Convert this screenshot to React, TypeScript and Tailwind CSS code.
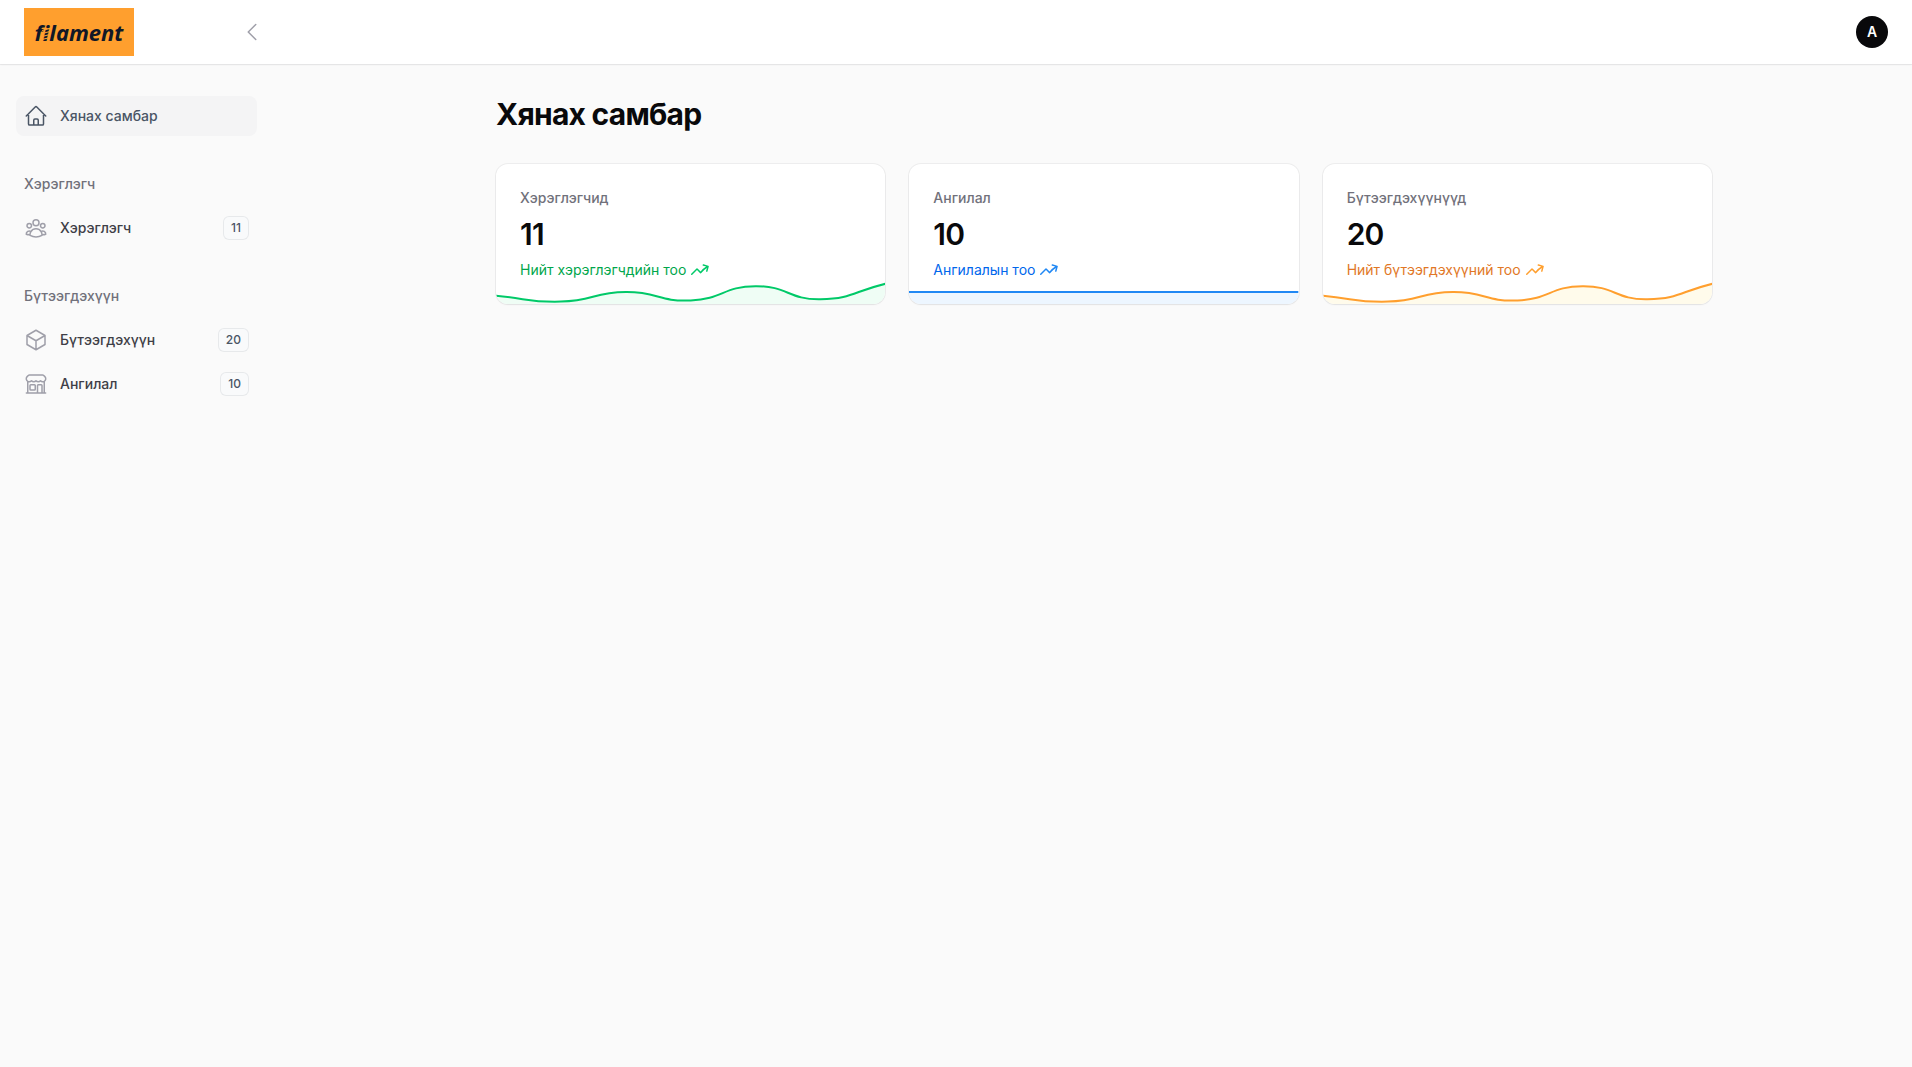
import type { IconType } from "react-icons";
import {
  HiMiniArrowTrendingUp,
  HiOutlineBuildingStorefront,
  HiOutlineChevronLeft,
  HiOutlineCube,
  HiOutlineHome,
  HiOutlineUserGroup,
} from "react-icons/hi2";

type NavItem = { label: string; icon: IconType; badge: string };
type NavGroup = { label: string; items: NavItem[] };

const groups: NavGroup[] = [
  { label: "Хэрэглэгч", items: [{ label: "Хэрэглэгч", icon: HiOutlineUserGroup, badge: "11" }] },
  {
    label: "Бүтээгдэхүүн",
    items: [
      { label: "Бүтээгдэхүүн", icon: HiOutlineCube, badge: "20" },
      { label: "Ангилал", icon: HiOutlineBuildingStorefront, badge: "10" },
    ],
  },
];

type Stat = {
  label: string;
  value: string;
  description: string;
  text: string;
  icon: string;
  stroke: string;
  fill: string;
  chart: number[];
};

const wave = [7, 2, 10, 3, 15, 4, 17];

const stats: Stat[] = [
  {
    label: "Хэрэглэгчид",
    value: "11",
    description: "Нийт хэрэглэгчдийн тоо",
    text: "text-[#00a64b]",
    icon: "text-[#00c968]",
    stroke: "stroke-[#00c968]",
    fill: "fill-[#effdf5]",
    chart: wave,
  },
  {
    label: "Ангилал",
    value: "10",
    description: "Ангилалын тоо",
    text: "text-[#0067ec]",
    icon: "text-[#2088f4]",
    stroke: "stroke-[#2088f4]",
    fill: "fill-[#edf6ff]",
    chart: [],
  },
  {
    label: "Бүтээгдэхүүнүүд",
    value: "20",
    description: "Нийт бүтээгдэхүүний тоо",
    text: "text-[#e17726]",
    icon: "text-[#ff9f2e]",
    stroke: "stroke-[#ff9f2e]",
    fill: "fill-[#fffbeb]",
    chart: wave,
  },
];

const CHART_W = 390;
const CHART_H = 24;

/* Smooth line through the points, with a tension of one half. */
function curve(values: number[]) {
  if (values.length === 0) return `M0 12H${CHART_W}`;
  const pts = values.map((v, i) => ({
    x: (i * CHART_W) / (values.length - 1),
    y: 24 - v * 1.19,
  }));
  const ctl = pts.map((p, i) => {
    const a = pts[Math.max(i - 1, 0)];
    const b = pts[Math.min(i + 1, pts.length - 1)];
    const d0 = Math.hypot(p.x - a.x, p.y - a.y);
    const d1 = Math.hypot(b.x - p.x, b.y - p.y);
    const fa = (0.5 * d0) / (d0 + d1);
    const fb = (0.5 * d1) / (d0 + d1);
    return {
      px: p.x - fa * (b.x - a.x),
      py: p.y - fa * (b.y - a.y),
      nx: p.x + fb * (b.x - a.x),
      ny: p.y + fb * (b.y - a.y),
    };
  });
  return pts
    .map((p, i) =>
      i === 0
        ? `M${p.x} ${p.y}`
        : `C${ctl[i - 1].nx} ${ctl[i - 1].ny} ${ctl[i].px} ${ctl[i].py} ${p.x} ${p.y}`,
    )
    .join("");
}

function Sparkline({ stat }: { stat: Stat }) {
  const d = curve(stat.chart);
  return (
    <svg
      aria-hidden="true"
      viewBox={`0 0 ${CHART_W} ${CHART_H}`}
      preserveAspectRatio="none"
      className="absolute inset-x-0 bottom-0 h-6 w-full"
    >
      <path d={`${d}V${CHART_H}H0Z`} className={stat.fill} />
      <path d={d} fill="none" strokeWidth="2" vectorEffect="non-scaling-stroke" className={stat.stroke} />
    </svg>
  );
}

function StatCard({ stat }: { stat: Stat }) {
  return (
    <section className="relative overflow-hidden rounded-xl bg-white p-6 shadow-xs ring-1 ring-zinc-950/5">
      <div className="grid gap-2">
        <h2 className="text-sm font-medium text-zinc-500">{stat.label}</h2>
        <p className="text-3xl font-semibold tracking-tight text-zinc-950">{stat.value}</p>
        <p className="flex items-center gap-1">
          <span className={`text-sm ${stat.text}`}>{stat.description}</span>
          <HiMiniArrowTrendingUp aria-hidden="true" className={`size-5 ${stat.icon}`} />
        </p>
      </div>
      <Sparkline stat={stat} />
    </section>
  );
}

/* Wordmark with a flat-footed "f" and a threaded "i". */
function Brand() {
  return (
    <a
      href="#"
      className="relative flex h-12 w-[110px] items-center justify-center bg-[#ff9f2e] font-['Noto_Sans',sans-serif] text-[22px] font-bold italic text-[#111827]"
    >
      filament
      <svg aria-hidden="true" viewBox="0 0 110 48" className="absolute inset-0 size-full">
        <path d="M0 33H30V42H0Z" fill="#ff9f2e" />
        <path
          d="M18 22.5L26 20.5M18 25.5L26 23.5M18 28.5L26 26.5M18 31.5L26 29.5"
          stroke="#ff9f2e"
          strokeWidth="1.1"
        />
      </svg>
    </a>
  );
}

export default function App() {
  return (
    <div className="min-h-screen bg-zinc-50 font-[Inter,sans-serif] text-zinc-950">
      <header className="relative flex h-16 items-center bg-white px-6 shadow-xs ring-1 ring-zinc-950/5">
        <div className="flex w-[240px] items-center justify-between">
          <Brand />
          <button type="button" aria-label="Хажуугийн цэс хаах" className="text-zinc-400">
            <HiOutlineChevronLeft className="size-6" />
          </button>
        </div>
        <button
          type="button"
          className="ml-auto flex size-8 items-center justify-center rounded-full bg-zinc-950 text-sm font-semibold text-white"
        >
          A
        </button>
      </header>

      <div className="flex">
        <nav className="flex w-[296px] shrink-0 flex-col gap-7 py-8 pr-[39px] pl-4">
          <a href="#" className="flex items-center gap-3 rounded-lg bg-zinc-100 p-2 text-sm leading-6 font-medium text-gray-600">
            <HiOutlineHome aria-hidden="true" className="size-6" />
            Хянах самбар
          </a>
          {groups.map((group) => (
            <section key={group.label} className="flex flex-col gap-1">
              <h2 className="p-2 text-sm leading-6 font-medium text-zinc-500">{group.label}</h2>
              <ul className="flex flex-col gap-1">
                {group.items.map((item) => (
                  <li key={item.label}>
                    <a href="#" className="flex items-center gap-3 rounded-lg p-2 text-sm leading-6 font-medium text-zinc-700">
                      <item.icon aria-hidden="true" className="size-6 text-zinc-400" />
                      <span className="flex-1">{item.label}</span>
                      <span className="flex h-6 min-w-6 items-center justify-center rounded-md bg-gray-50 px-2 text-xs font-medium text-gray-600 ring-1 ring-gray-600/10 ring-inset">
                        {item.badge}
                      </span>
                    </a>
                  </li>
                ))}
              </ul>
            </section>
          ))}
        </nav>

        <main className="mx-auto flex w-full max-w-7xl flex-col gap-8 px-8 py-8">
          <h1 className="text-3xl font-bold tracking-tight text-zinc-950">Хянах самбар</h1>
          <div className="grid grid-cols-3 gap-6">
            {stats.map((stat) => (
              <StatCard key={stat.label} stat={stat} />
            ))}
          </div>
        </main>
      </div>
    </div>
  );
}
